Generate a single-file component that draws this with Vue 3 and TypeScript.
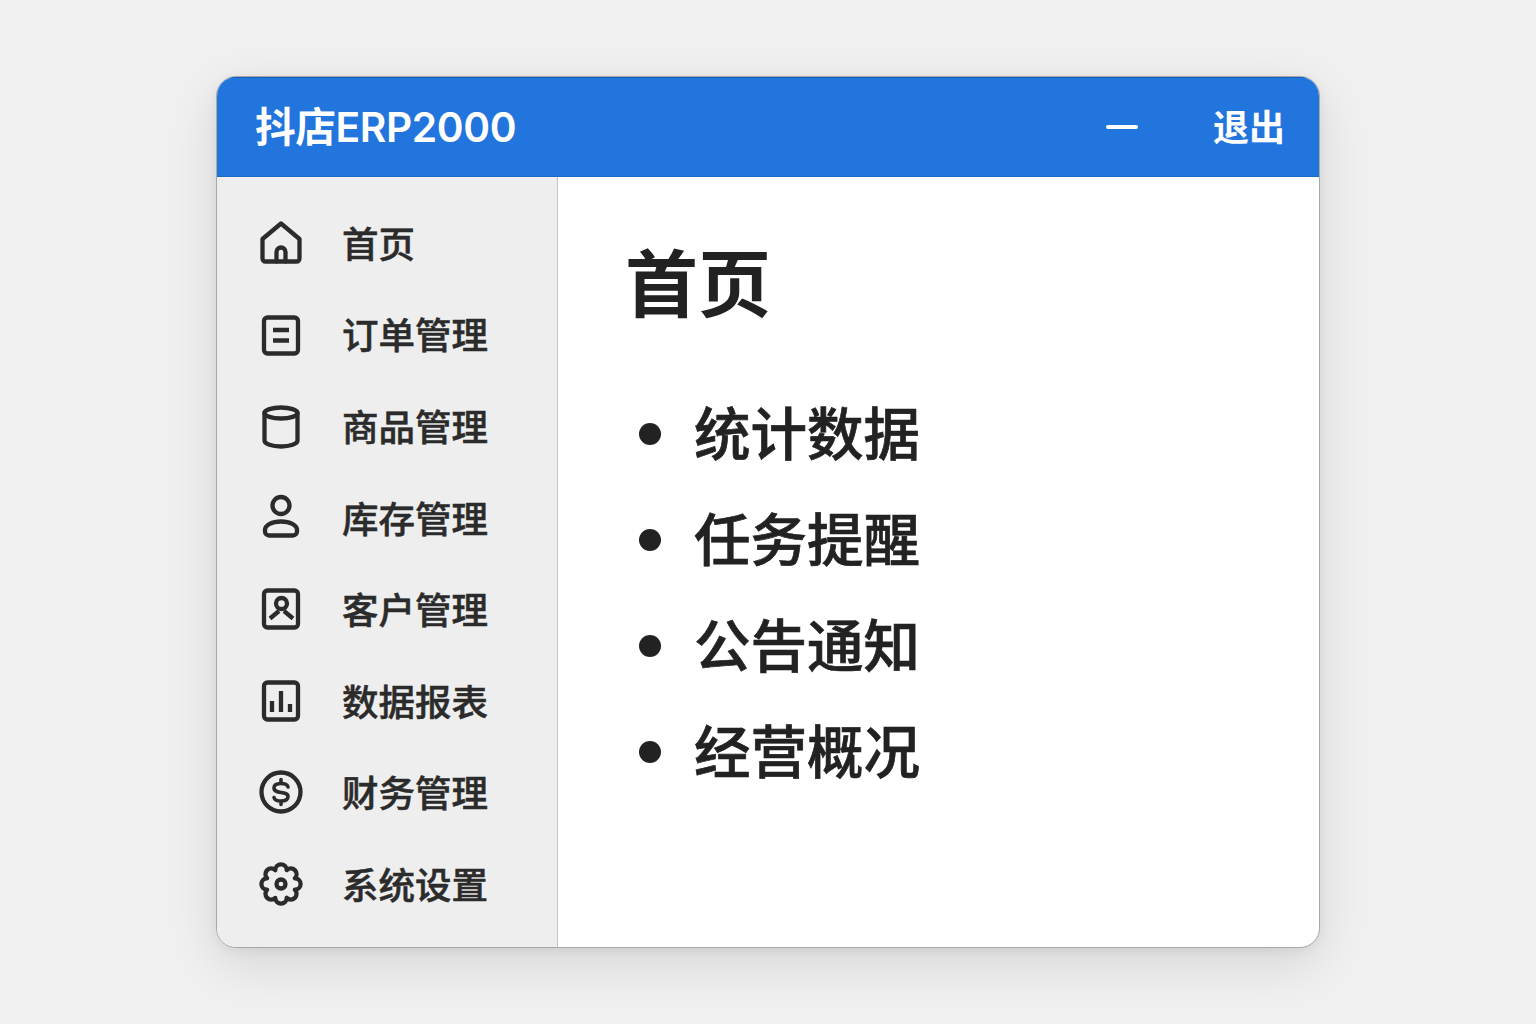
<script setup lang="ts">
const nav: { label: string; icon: string }[] = [
  { label: '首页', icon: 'home' },
  { label: '订单管理', icon: 'order' },
  { label: '商品管理', icon: 'db' },
  { label: '库存管理', icon: 'user' },
  { label: '客户管理', icon: 'contact' },
  { label: '数据报表', icon: 'chart' },
  { label: '财务管理', icon: 'dollar' },
  { label: '系统设置', icon: 'gear' },
]
const items = ['统计数据', '任务提醒', '公告通知', '经营概况']

function gearPath(lobes: number, notchR: number, arcR: number): string {
  const pts: string[] = []
  for (let i = 0; i < lobes; i++) {
    const a = ((i + 0.5) / lobes) * Math.PI * 2 - Math.PI / 2
    const x = (24 + notchR * Math.cos(a)).toFixed(2)
    const y = (24 + notchR * Math.sin(a)).toFixed(2)
    pts.push(i === 0 ? `M${x} ${y}` : `A${arcR} ${arcR} 0 1 1 ${x} ${y}`)
  }
  const a0 = (0.5 / lobes) * Math.PI * 2 - Math.PI / 2
  const x0 = (24 + notchR * Math.cos(a0)).toFixed(2)
  const y0 = (24 + notchR * Math.sin(a0)).toFixed(2)
  return `${pts.join(' ')} A${arcR} ${arcR} 0 1 1 ${x0} ${y0} Z`
}
const gear = gearPath(8, 15, 5)
</script>

<template>
  <div class="page">
    <div class="window">
      <header class="titlebar">
        <span class="title">抖店ERP2000</span>
        <div class="actions">
          <span class="minimize"></span>
          <span class="exit">退出</span>
        </div>
      </header>
      <div class="body">
        <aside class="sidebar">
          <div v-for="n in nav" :key="n.label" class="nav-item">
            <svg class="icon" viewBox="0 0 48 48" fill="none" stroke="#2b2b2b" stroke-width="4.3" stroke-linecap="round" stroke-linejoin="round">
              <template v-if="n.icon === 'home'">
                <path d="M5.500 20 L24 4.500 L42.500 20 V39.500 a3 3 0 0 1 -3 3 H8.500 a3 3 0 0 1 -3 -3 Z" />
                <path d="M19.500 42.500 V33 a4.500 4.500 0 0 1 9 0 V42.500" />
              </template>
              <template v-else-if="n.icon === 'order'">
                <rect x="7" y="7.500" width="34" height="36" rx="3.500" />
                <path d="M16 20 H32 M16 30.500 H32" stroke-linecap="butt" />
              </template>
              <template v-else-if="n.icon === 'db'">
                <ellipse cx="24" cy="11" rx="16.500" ry="5.500" />
                <path d="M7.500 11 V38.500 c0 3.500 7.500 6 16.500 6 s16.500 -2.500 16.500 -6 V11" />
              </template>
              <template v-else-if="n.icon === 'user'">
                <circle cx="24" cy="11.500" r="8.500" />
                <path d="M8 36 c0 -5 7 -8.500 16 -8.500 s16 3.500 16 8.500 v1.500 a4 4 0 0 1 -4 4 H12 a4 4 0 0 1 -4 -4 Z" />
              </template>
              <template v-else-if="n.icon === 'contact'">
                <rect x="7" y="5.500" width="34" height="37" rx="3.500" />
                <circle cx="24.500" cy="18.500" r="5.500" />
                <path d="M13 33.500 L22 26 M36 33.500 L27 26" stroke-linecap="butt" />
              </template>
              <template v-else-if="n.icon === 'chart'">
                <rect x="7" y="5.500" width="34" height="37" rx="3.500" />
                <path d="M15 35 V24 M24 35 V14 M33 35 V27" stroke-linecap="butt" />
              </template>
              <template v-else-if="n.icon === 'dollar'">
                <circle cx="24" cy="24" r="19.500" />
                <path d="M31 19 c-.5 -2.500 -3.500 -3.500 -7 -3.500 c-4 0 -7 1.500 -7 4.500 c0 6.500 14 2.500 14 8.500 c0 3 -3 4.500 -7 4.500 c-3.500 0 -6.500 -1 -7 -3.500 M24 11.500 V15 M24 33 V36.500" stroke-width="3.600" />
              </template>
              <template v-else>
                <path :d="gear" />
                <circle cx="24" cy="24" r="4.500" />
              </template>
            </svg>
            <span class="nav-label">{{ n.label }}</span>
          </div>
        </aside>
        <main class="content">
          <h1 class="heading">首页</h1>
          <ul class="list">
            <li v-for="item in items" :key="item" class="list-item">
              <span class="bullet"></span>
              <span class="item-text">{{ item }}</span>
            </li>
          </ul>
        </main>
      </div>
    </div>
  </div>
</template>

<style>
html, body { margin: 0; background: #f0f0f0; }
</style>

<style scoped>
.page {
  width: 1536px;
  height: 1024px;
  background: #f0f0f0;
  padding: 76px 0 0 216px;
  box-sizing: border-box;
  font-family: "Inter", "Noto Sans CJK SC", sans-serif;
}
.window {
  width: 1104px;
  height: 872px;
  border-radius: 20px;
  border: 1px solid #a8a8a8;
  box-sizing: border-box;
  background: #fff;
  overflow: hidden;
  display: flex;
  flex-direction: column;
  box-shadow: 0 16px 50px rgba(0, 0, 0, 0.11), 0 3px 12px rgba(0, 0, 0, 0.06);
}
.titlebar {
  height: 100px;
  flex: none;
  background: #2275dc;
  box-shadow: inset 0 1px 0 #1560bd, inset 0 -1px 0 #1b69cb;
  color: #fff;
  display: flex;
  align-items: center;
  justify-content: space-between;
  padding: 0 34px 5px 38px;
  box-sizing: border-box;
}
.title { font-size: 40.7px; font-weight: 600; letter-spacing: -0.4px; }
.actions { display: flex; align-items: center; gap: 75px; }
.minimize { width: 32px; height: 4px; background: #fff; border-radius: 2px; margin-top: 5px; }
.exit { font-size: 36px; font-weight: 700; }
.body { flex: 1; display: flex; min-height: 0; }
.sidebar {
  width: 341px;
  flex: none;
  background: #eeeeee;
  border-right: 1px solid #c4c4c4;
  box-sizing: border-box;
  padding: 33px 0 0 40px;
  display: flex;
  flex-direction: column;
  gap: 27px;
}
.nav-item { display: flex; align-items: center; height: 64.6px; color: #2b2b2b; }
.icon { width: 48px; height: 48px; flex: none; margin-top: 1px; }
.nav-label { margin-left: 37px; font-size: 36.5px; font-weight: 500; color: #2b2b2b; -webkit-text-stroke: 0.5px #2b2b2b; }
.content { flex: 1; padding: 63px 0 0 67px; }
.heading { margin: 0; font-size: 73px; line-height: 90px; font-weight: 700; color: #222; }
.list { list-style: none; margin: 62px 0 0; padding: 0; display: flex; flex-direction: column; gap: 30px; }
.list-item { display: flex; align-items: center; height: 76px; font-size: 56.5px; font-weight: 500; color: #222; }
.item-text { -webkit-text-stroke: 0.7px #222; }
.bullet { width: 22px; height: 22px; border-radius: 50%; background: #222; margin: 8px 33px 0 14px; flex: none; }
</style>
